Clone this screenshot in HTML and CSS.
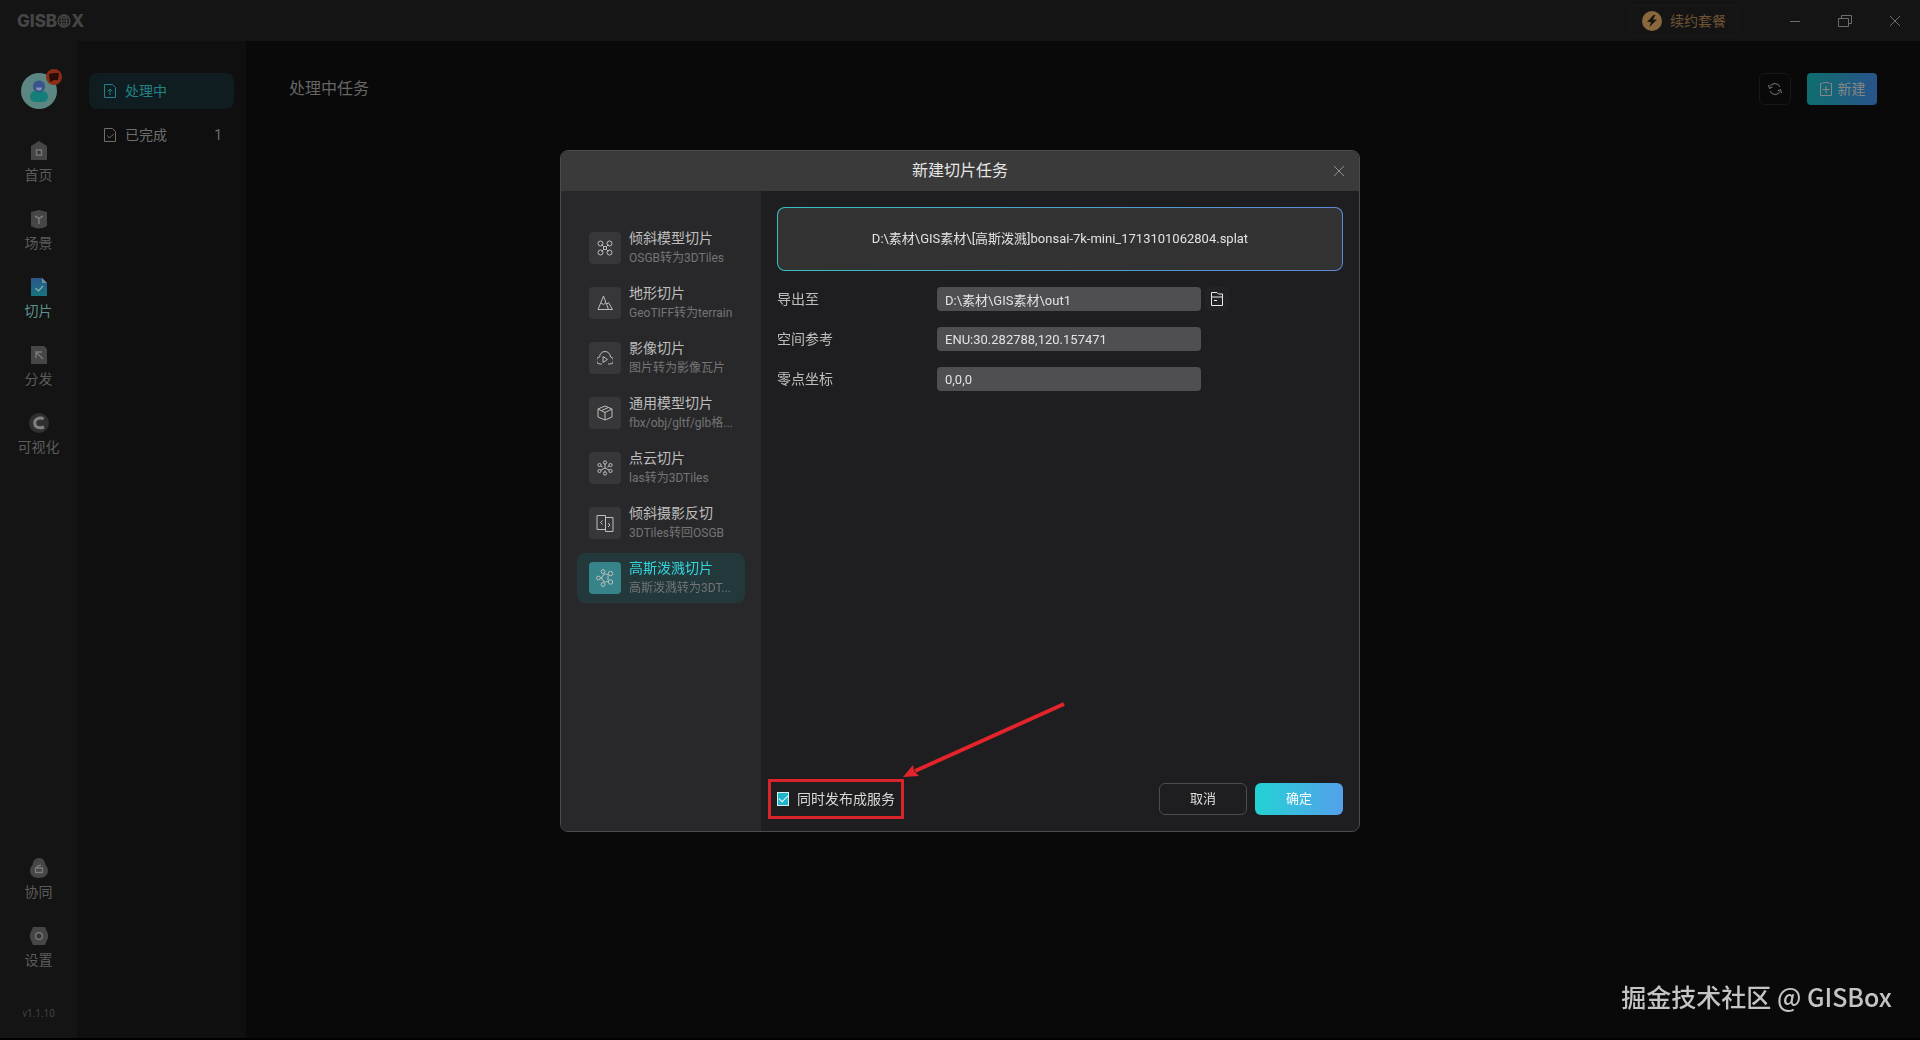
FILE: index.html
```html
<!DOCTYPE html>
<html lang="zh-CN">
<head>
    <meta charset="UTF-8">
    <title>GISBox - 新建切片任务</title>
    <meta name="viewport" content="width=device-width, initial-scale=1.0">
    <link rel="stylesheet" href="styles.css">
</head>
<body>
    <header class="titlebar">
        <div class="logo">
            <span>GISB</span>
            <svg width="14" height="14" viewBox="0 0 14 14" fill="none" stroke="currentColor" stroke-width="1.4"><circle cx="7" cy="7" r="6"/><ellipse cx="7" cy="7" rx="2.6" ry="6"/><path d="M1 7h12M2 4h10M2 10h10M7 1v12" stroke-width="1"/></svg>
            <span>X</span>
        </div>
        <div class="titlebar-right">
            <button class="renew" type="button">
                <svg width="20" height="20" viewBox="0 0 20 20"><circle cx="10" cy="10" r="10" fill="#8b673e"/><path d="M11.5 4L5 11h4l-1.500 5L15 8.500h-4L13.500 4z" fill="#1b1510"/></svg>
                续约套餐
            </button>
            <button class="win-btn" type="button" aria-label="最小化"><svg width="14" height="14" viewBox="0 0 14 14"><path d="M2 7.500h10"/></svg></button>
            <button class="win-btn" type="button" aria-label="还原"><svg width="14" height="14" viewBox="0 0 14 14"><path d="M.5 4.500h10v8H.5zM3.500 4.500v-3h10v8h-3"/></svg></button>
            <button class="win-btn" type="button" aria-label="关闭"><svg width="14" height="14" viewBox="0 0 14 14"><path d="M2 2l10 10M12 2L2 12"/></svg></button>
        </div>
    </header>

    <div class="layout">
        <aside class="sidebar">
            <div class="avatar">
                <svg width="36" height="36" viewBox="0 0 36 36"><circle cx="18" cy="18" r="18" fill="#5c8681"/><rect x="9" y="18" width="18" height="11" rx="5.500" fill="#147f78"/><circle cx="18" cy="13.500" r="6" fill="#39538e"/><path d="M15 14.500h6a3 3 0 0 1-6 0z" fill="#8198ae"/></svg>
                <svg class="avatar-badge" width="16" height="16" viewBox="0 0 16 16"><circle cx="8" cy="8" r="8" fill="#8d2c15"/><path d="M3 5l5-1h5l-1 7H8l-4 2z" fill="#260d09"/></svg>
            </div>
            <nav class="side-nav">
                <a href="#">
                    <svg width="20" height="20" viewBox="0 0 20 20"><path d="M10 0l8 5v14H2V5z" fill="#464646"/><path d="M7.500 9h5v5h-5z" fill="#383838" stroke="#777" stroke-width="1.500"/></svg>
                    首页
                </a>
                <a href="#">
                    <svg width="20" height="20" viewBox="0 0 20 20"><path d="M10 1l8 2v14q-8 5-16 0V3z" fill="#464646"/><path d="M6 7l4 2.500L14 7M10 9.500V15" fill="none" stroke="#787878" stroke-width="1.500"/></svg>
                    场景
                </a>
                <a href="#" class="active">
                    <svg width="20" height="20" viewBox="0 0 20 20"><defs><linearGradient id="fileFill" x1="0" y1="0" x2="0" y2="1"><stop offset="0" stop-color="#2d568b"/><stop offset="1" stop-color="#14757e"/></linearGradient></defs><path d="M2 1h11l5 5v13H2z" fill="url(#fileFill)"/><path d="M13 1v5h5z" fill="#6a9499"/><path d="M6.500 11l3 3L14 9" fill="none" stroke="#7fa7ac" stroke-width="1.500"/></svg>
                    切片
                </a>
                <a href="#">
                    <svg width="20" height="20" viewBox="0 0 20 20"><path d="M2 1h13l3 3v15H2z" fill="#464646"/><path d="M13 7H7v6M7 7l7 7" fill="none" stroke="#777" stroke-width="1.500"/></svg>
                    分发
                </a>
                <a href="#">
                    <svg width="20" height="20" viewBox="0 0 20 20"><circle cx="10" cy="10" r="10" fill="#303030"/><path d="M14.500 6q-3-2-6.500 0t-1.500 7q3 3 8.500 1" fill="none" stroke="#818181" stroke-width="3"/></svg>
                    可视化
                </a>
            </nav>
            <nav class="side-nav side-bottom">
                <a href="#">
                    <svg width="20" height="20" viewBox="0 0 20 20"><path d="M10 0c4 0 6 3 6.500 7C19 9 20 14 17.500 17q-2 3-7.500 3t-7.500-3C0 14 1 9 3.500 7 4 3 6 0 10 0z" fill="#464646"/><path d="M6.500 10h7v4.500h-7zM8 10q0-3 4-2.500" fill="none" stroke="#7b7b7b" stroke-width="1.300"/></svg>
                    协同
                </a>
                <a href="#">
                    <svg width="20" height="20" viewBox="0 0 20 20"><path d="M4 1h12l3 7v4l-3 7H4l-3-7V8z" fill="#464646"/><circle cx="10" cy="10" r="3.300" fill="#333" stroke="#777" stroke-width="1.500"/></svg>
                    设置
                </a>
            </nav>
            <div class="version">v1.1.10</div>
        </aside>

        <aside class="task-menu">
            <a href="#" class="active">
                <svg width="14" height="14" viewBox="0 0 14 14"><path d="M1.500.5h8l3 3v10h-11zM7 11V5M4.500 7.500L7 5l2.500 2.500"/></svg>
                <span>处理中</span>
            </a>
            <a href="#">
                <svg width="14" height="14" viewBox="0 0 14 14"><path d="M1.500.5h8l3 3v10h-11zM4.500 7.500l2 2.500 4-4"/></svg>
                <span>已完成</span>
                <span class="count">1</span>
            </a>
        </aside>

        <main class="content">
            <h1>处理中任务</h1>
            <div class="toolbar">
                <button class="refresh" type="button" aria-label="刷新"><svg width="14" height="14" viewBox="0 0 14 14"><path d="M12 5A5.500 5.500 0 0 0 2 4.500M.5 3l1 3.500 3-1.500M2 9a5.500 5.500 0 0 0 10 .5M13.500 11l-1-3.500-3 1.500"/></svg></button>
                <button class="create" type="button"><svg width="14" height="14" viewBox="0 0 14 14"><path d="M3 1.500H1.500v12h11v-12H11M3.500 1q3.500-1 7 0M7 4v7M3.500 7.500h7"/></svg>新建</button>
            </div>
        </main>
    </div>

    <div class="overlay">
        <div class="modal" role="dialog" aria-labelledby="modalTitle">
            <div class="modal-header">
                <h2 id="modalTitle">新建切片任务</h2>
                <button class="modal-close" type="button" aria-label="关闭"><svg width="12" height="12" viewBox="0 0 12 12"><path d="M1 1l10 10M11 1L1 11"/></svg></button>
            </div>
            <div class="modal-body">
                <nav class="type-list">
                    <a href="#">
                        <i class="tile"><svg width="16" height="16" viewBox="0 0 16 16"><circle cx="3.500" cy="3.500" r="2.500"/><circle cx="12.500" cy="3.500" r="2.500"/><circle cx="3.500" cy="12.500" r="2.500"/><circle cx="12.500" cy="12.500" r="2.500"/><path d="M4.500 4.500l2 2h3l2-2M4.500 11.500l2-2h3l2 2M6.500 6.500v3M9.500 6.500v3"/></svg></i>
                        <span class="type-text"><b>倾斜模型切片</b><small>OSGB转为3DTiles</small></span>
                    </a>
                    <a href="#">
                        <i class="tile"><svg width="16" height="16" viewBox="0 0 16 16"><path d="M1 14.500L6.500 1l5 13.500zM4 8l2.500 1.500L9 7.500M10 9l1.500-1.500 4 7h-4"/></svg></i>
                        <span class="type-text"><b>地形切片</b><small>GeoTIFF转为terrain</small></span>
                    </a>
                    <a href="#">
                        <i class="tile"><svg width="16" height="16" viewBox="0 0 16 16"><path d="M5 14H3.500A3.500 3.500 0 0 1 2.500 7C3 3.500 5 1.500 8 1.500S13 3.500 13.500 7a3.500 3.500 0 0 1-1 7H11M6 6.500v6L10.500 9.500z"/></svg></i>
                        <span class="type-text"><b>影像切片</b><small>图片转为影像瓦片</small></span>
                    </a>
                    <a href="#">
                        <i class="tile"><svg width="16" height="16" viewBox="0 0 16 16"><path d="M8 1l7 3v8l-7 3-7-3V4zM1 4l7 3.500L15 4M8 7.500V15M4.500 5.500l7-3"/></svg></i>
                        <span class="type-text"><b>通用模型切片</b><small>fbx/obj/gltf/glb格...</small></span>
                    </a>
                    <a href="#">
                        <i class="tile"><svg width="16" height="16" viewBox="0 0 16 16"><circle cx="8" cy="2.500" r="1.600"/><circle cx="8" cy="13.500" r="1.600"/><circle cx="2.500" cy="5" r="1.600"/><circle cx="13.500" cy="5" r="1.600"/><circle cx="2.500" cy="11" r="1.600"/><circle cx="13.500" cy="11" r="1.600"/><path d="M8 4v4M4 10l4-2 4 2M4 6l1.500 1M12 6l-1.500 1M8 10.500v1.500"/></svg></i>
                        <span class="type-text"><b>点云切片</b><small>las转为3DTiles</small></span>
                    </a>
                    <a href="#">
                        <i class="tile"><svg width="18" height="18" viewBox="0 0 18 18"><path d="M9.500 15.500H1v-14h8.500zM9.500 3.500H17v14H9.500zM6.500 6.500l-2 2 2 2M12 9l2 2-2 2"/></svg></i>
                        <span class="type-text"><b>倾斜摄影反切</b><small>3DTiles转回OSGB</small></span>
                    </a>
                    <a href="#" class="active">
                        <i class="tile"><svg width="18" height="18" viewBox="0 0 18 18"><circle cx="2.500" cy="9" r="1.900"/><circle cx="7" cy="2.500" r="1.900"/><circle cx="14.500" cy="4.500" r="2.200"/><circle cx="14.500" cy="13" r="2.200"/><circle cx="7" cy="15.500" r="1.900"/><path d="M12.500 6a4 4 0 1 0 0 6M4.500 9H6M7.500 4.500l1 1.500M7.500 13.500l1-1.500M12 6.500v4.500"/></svg></i>
                        <span class="type-text"><b>高斯泼溅切片</b><small>高斯泼溅转为3DT...</small></span>
                    </a>
                </nav>

                <form class="task-form">
                    <button class="file-drop" type="button">D:\素材\GIS素材\[高斯泼溅]bonsai-7k-mini_1713101062804.splat</button>
                    <div class="form-row">
                        <label for="exportPath">导出至</label>
                        <input type="text" id="exportPath" value="D:\素材\GIS素材\out1">
                        <button class="browse" type="button" aria-label="选择文件夹"><svg width="14" height="14" viewBox="0 0 14 14"><path d="M1.500.5H7L8.500 2h4v11.500h-11zM1.500 5h11M4 8.500h3"/></svg></button>
                    </div>
                    <div class="form-row">
                        <label for="spaceRef">空间参考</label>
                        <input type="text" id="spaceRef" value="ENU:30.282788,120.157471">
                    </div>
                    <div class="form-row">
                        <label for="origin">零点坐标</label>
                        <input type="text" id="origin" value="0,0,0">
                    </div>
                    <div class="form-footer">
                        <div class="publish">
                            <input type="checkbox" id="publish" checked>
                            <label for="publish">同时发布成服务</label>
                            <svg class="arrow" width="162" height="76" viewBox="0 0 162 76"><path d="M161 2L12 69" stroke="#e3242b" stroke-width="4"/><path d="M0 75l10-12 1 6 5 5z" fill="#e3242b"/></svg>
                        </div>
                        <button class="btn-cancel" type="button">取消</button>
                        <button class="btn-ok" type="submit">确定</button>
                    </div>
                </form>
            </div>
        </div>
    </div>

    <div class="watermark">掘金技术社区 @ GISBox</div>
</body>
</html>
```

FILE: styles.css
```css
* {
    box-sizing: border-box;
}
body {
    margin: 0;
    min-height: 100vh;
    display: flex;
    flex-direction: column;
    background: #090909;
    border-bottom: 2px solid #000;
    color: #6c6c6c;
    font-family: Roboto, "Noto Sans CJK SC", sans-serif;
    font-size: 14px;
    line-height: 20px;
}
a {
    color: inherit;
    text-decoration: none;
}
button, input {
    font-family: inherit;
    font-size: inherit;
    line-height: inherit;
    color: inherit;
}
button {
    display: flex;
    align-items: center;
    justify-content: center;
    padding: 0;
    border: none;
    background: none;
    cursor: pointer;
}
svg {
    display: block;
    flex: none;
}
h1, h2 {
    margin: 0;
    font-size: 16px;
    font-weight: normal;
}

/* title bar */
.titlebar {
    display: flex;
    align-items: center;
    justify-content: space-between;
    height: 41px;
    padding-left: 17px;
    background: #141414;
}
.logo {
    display: flex;
    align-items: center;
    color: #454545;
    font: 800 17px/20px Inter, sans-serif;
}
.titlebar-right {
    display: flex;
    align-items: center;
}
.renew {
    gap: 8px;
    height: 32px;
    margin-right: 32px;
    padding: 0 11px;
    border: 1px solid #191919;
    border-radius: 6px;
    color: #6f5333;
}
.win-btn {
    width: 50px;
    height: 40px;
}
.win-btn svg, .refresh svg, .create svg, .task-menu svg, .modal-close svg, .tile svg, .browse svg {
    fill: none;
    stroke: currentColor;
}

/* left navigation */
.layout {
    flex: 1;
    display: flex;
}
.sidebar {
    width: 77px;
    display: flex;
    flex-direction: column;
    align-items: center;
    padding: 32px 0 14px;
    background: #141414;
}
.avatar {
    position: relative;
    margin-bottom: 32px;
}
.avatar-badge {
    position: absolute;
    top: -4px;
    right: -5px;
}
.side-nav {
    display: flex;
    flex-direction: column;
    gap: 24px;
}
.side-nav a {
    display: flex;
    flex-direction: column;
    align-items: center;
    gap: 4px;
    color: #5c5c5c;
}
.side-nav .active {
    color: #5a918a;
}
.side-bottom {
    margin-top: auto;
}
.version {
    margin-top: 34px;
    font-size: 10px;
    color: #424242;
}
.task-menu {
    width: 169px;
    display: flex;
    flex-direction: column;
    gap: 8px;
    padding: 32px 12px;
    background: #0f0f0f;
}
.task-menu a {
    display: flex;
    align-items: center;
    gap: 8px;
    height: 36px;
    padding: 0 12px 0 14px;
    border-radius: 8px;
    color: #6e6e6e;
}
.task-menu .active {
    background: #0f1d20;
    color: #238187;
}
.count {
    margin-left: auto;
}

/* task page */
.content {
    flex: 1;
    display: flex;
    align-items: flex-start;
    justify-content: space-between;
    padding: 32px 43px;
}
.content h1 {
    line-height: 32px;
    color: #666;
}
.toolbar {
    display: flex;
    gap: 16px;
}
.refresh {
    width: 32px;
    height: 32px;
    border: 1px solid #181818;
    border-radius: 6px;
    color: #787878;
}
.create {
    gap: 5px;
    width: 70px;
    height: 32px;
    border-radius: 4px;
    background: linear-gradient(90deg, #0f6d6e, #28548a);
    color: #868686;
}

/* new task dialog */
.overlay {
    position: fixed;
    inset: 0;
    display: flex;
    justify-content: center;
    align-items: flex-start;
    padding-top: 150px;
}
.modal {
    width: 800px;
    max-width: 96%;
    border: 1px solid #4b4b4d;
    border-radius: 8px;
    overflow: hidden;
    background: #1e1e20;
    color: #bebebe;
}
.modal-header {
    display: grid;
    grid-template-columns: 32px 1fr 32px;
    align-items: center;
    height: 40px;
    padding: 0 4px;
    background: #3a3a3b;
    color: #e6e6e6;
}
.modal-header h2 {
    grid-column: 2;
    text-align: center;
}
.modal-close {
    height: 32px;
    color: #909090;
}
.modal-body {
    display: flex;
    min-height: 640px;
}
.type-list {
    width: 200px;
    display: flex;
    flex-direction: column;
    gap: 5px;
    padding: 32px 16px;
    background: #28282a;
}
.type-list a {
    display: flex;
    align-items: center;
    gap: 8px;
    height: 50px;
    padding: 0 8px 0 12px;
    border-radius: 8px;
}
.tile {
    flex: none;
    display: flex;
    align-items: center;
    justify-content: center;
    width: 32px;
    height: 32px;
    border-radius: 4px;
    background: #373739;
}
.type-text {
    display: flex;
    flex-direction: column;
    white-space: nowrap;
}
.type-text b {
    font-weight: normal;
}
.type-text small {
    font-size: 12px;
    color: #747476;
}
.type-list .active {
    background: #22383b;
}
.type-list .active b {
    color: #35d5dc;
}
.type-list .active .tile {
    background: #37838a;
}
.task-form {
    flex: 1;
    display: flex;
    flex-direction: column;
    gap: 16px;
    padding: 16px;
}
.file-drop {
    height: 64px;
    border: 1px solid transparent;
    border-radius: 8px;
    background: linear-gradient(#323233, #323233) padding-box, linear-gradient(90deg, #38bfc0, #6088d8) border-box;
    color: #e2e2e2;
    font-size: 13px;
}
.form-row {
    display: grid;
    grid-template-columns: 156px 264px 24px;
    column-gap: 4px;
    align-items: center;
}
.form-row input {
    width: 100%;
    height: 24px;
    padding: 0 8px;
    border: none;
    border-radius: 4px;
    background: #4f4f53;
    color: #e2e2e2;
    font-size: 13px;
}
.browse {
    height: 24px;
    border-radius: 4px;
    background: #222224;
    color: #e8e8e8;
}
.form-footer {
    display: flex;
    align-items: center;
    gap: 8px;
    margin-top: auto;
}
.publish {
    position: relative;
    display: flex;
    align-items: center;
    gap: 8px;
    margin-right: auto;
    color: #d8d8d8;
}
.publish input {
    appearance: none;
    width: 12px;
    height: 14px;
    margin: 0;
    border: 1px solid #d9eef1;
    background: #1eb2cb;
    display: grid;
    place-items: center;
}
.publish input:checked::after {
    content: "";
    width: 8px;
    height: 4px;
    margin-bottom: 3px;
    border-left: 1px solid #fff;
    border-bottom: 1px solid #fff;
    transform: rotate(-45deg);
}
.publish::after {
    content: "";
    position: absolute;
    inset: -10px -9px;
    border: 3px solid #d9242a;
    pointer-events: none;
}
.arrow {
    position: absolute;
    left: 126px;
    bottom: 31px;
}
.btn-cancel, .btn-ok {
    width: 88px;
    height: 32px;
    border-radius: 6px;
    font-size: 13px;
}
.btn-cancel {
    border: 1px solid #4c4c4e;
    color: #dedede;
}
.btn-ok {
    background: linear-gradient(90deg, #23d2d4, #54a0eb);
    color: #fff;
}

.watermark {
    position: fixed;
    right: 28px;
    bottom: 26px;
    font: 500 25px/36px "Noto Sans CJK SC", sans-serif;
    color: #c4c4c4;
}
```
